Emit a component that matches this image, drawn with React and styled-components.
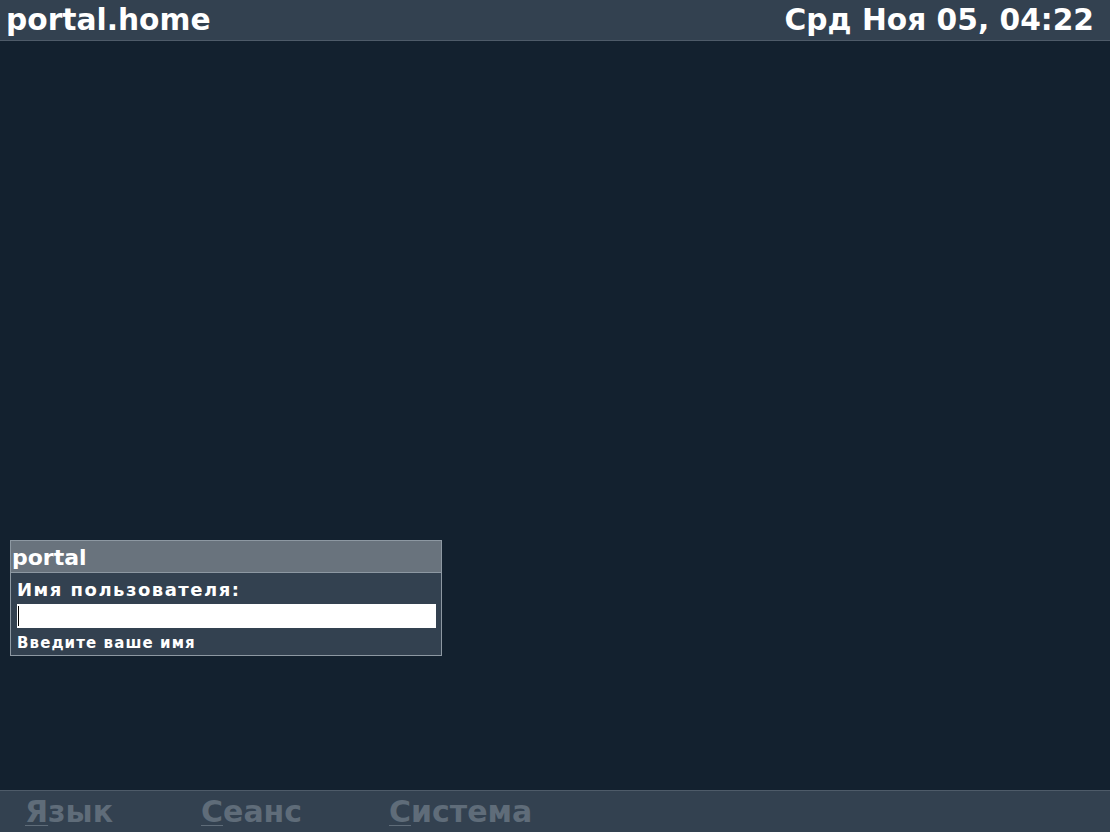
import styled, { createGlobalStyle } from 'styled-components';

const GlobalStyle = createGlobalStyle`
  html, body {
    margin: 0;
    padding: 0;
    height: 100%;
    background: #13212f;
  }
  #root {
    height: 100%;
  }
`;

export default function App() {
  return (
    <>
      <GlobalStyle />
      <Screen>
        <TopBar>
          <HostName>portal.home</HostName>
          <Clock>Срд Ноя 05, 04:22</Clock>
        </TopBar>
        <Stage>
          <LoginPanel>
            <PanelTitle>portal</PanelTitle>
            <PanelBody>
              <FieldLabel>Имя пользователя:</FieldLabel>
              <UserInput>
                <Caret />
              </UserInput>
              <Hint>Введите ваше имя</Hint>
            </PanelBody>
          </LoginPanel>
        </Stage>
        <BottomBar>
          <MenuItem $width="176px">
            <Mnemonic>Я</Mnemonic>зык
          </MenuItem>
          <MenuItem $width="188px">
            <Mnemonic>С</Mnemonic>еанс
          </MenuItem>
          <MenuItem>
            <Mnemonic>С</Mnemonic>истема
          </MenuItem>
        </BottomBar>
      </Screen>
    </>
  );
}

const Screen = styled.div`
  display: flex;
  flex-direction: column;
  height: 832px;
  font-family: 'DejaVu Sans', sans-serif;
  font-weight: bold;
  background: #13212f;
`;

const TopBar = styled.div`
  display: flex;
  justify-content: space-between;
  align-items: center;
  height: 40px;
  padding: 0 16px 0 6px;
  background: #334150;
  border-bottom: 1px solid #4e5b69;
  color: #ffffff;
  font-size: 29.7px;
`;

const HostName = styled.div`
  line-height: 42px;
`;

const Clock = styled.div`
  line-height: 42px;
`;

const Stage = styled.div`
  flex: 1;
  display: flex;
  flex-direction: column;
  justify-content: flex-end;
  padding: 0 0 134px 10px;
`;

const LoginPanel = styled.div`
  width: 430px;
  border: 1px solid #8d98a2;
  background: #334150;
`;

const PanelTitle = styled.div`
  height: 31px;
  padding-left: 1px;
  background: #69737d;
  border-bottom: 1px solid #8d98a2;
  color: #ffffff;
  font-size: 22px;
  line-height: 33px;
`;

const PanelBody = styled.div`
  display: flex;
  flex-direction: column;
  padding: 2px 5px 0 6px;
`;

const FieldLabel = styled.div`
  height: 29px;
  color: #ffffff;
  font-size: 18px;
  letter-spacing: 1.5px;
  line-height: 29px;
`;

const UserInput = styled.div`
  display: flex;
  align-items: center;
  height: 24px;
  background: #ffffff;
`;

const Caret = styled.span`
  width: 1px;
  height: 20px;
  margin-left: 1px;
  background: #000000;
`;

const Hint = styled.div`
  height: 24px;
  padding-top: 3px;
  color: #ffffff;
  font-size: 15px;
  letter-spacing: 1.1px;
  line-height: 24px;
`;

const BottomBar = styled.div`
  display: flex;
  align-items: center;
  height: 41px;
  padding-left: 25px;
  background: #334150;
  border-top: 1px solid #4e5b69;
`;

const MenuItem = styled.div`
  width: ${(p) => p.$width || 'auto'};
  color: #5f6c79;
  font-size: 30px;
  line-height: 42px;
`;

const Mnemonic = styled.span`
  text-decoration: underline;
  text-decoration-thickness: 1px;
  text-underline-offset: 3px;
`;
